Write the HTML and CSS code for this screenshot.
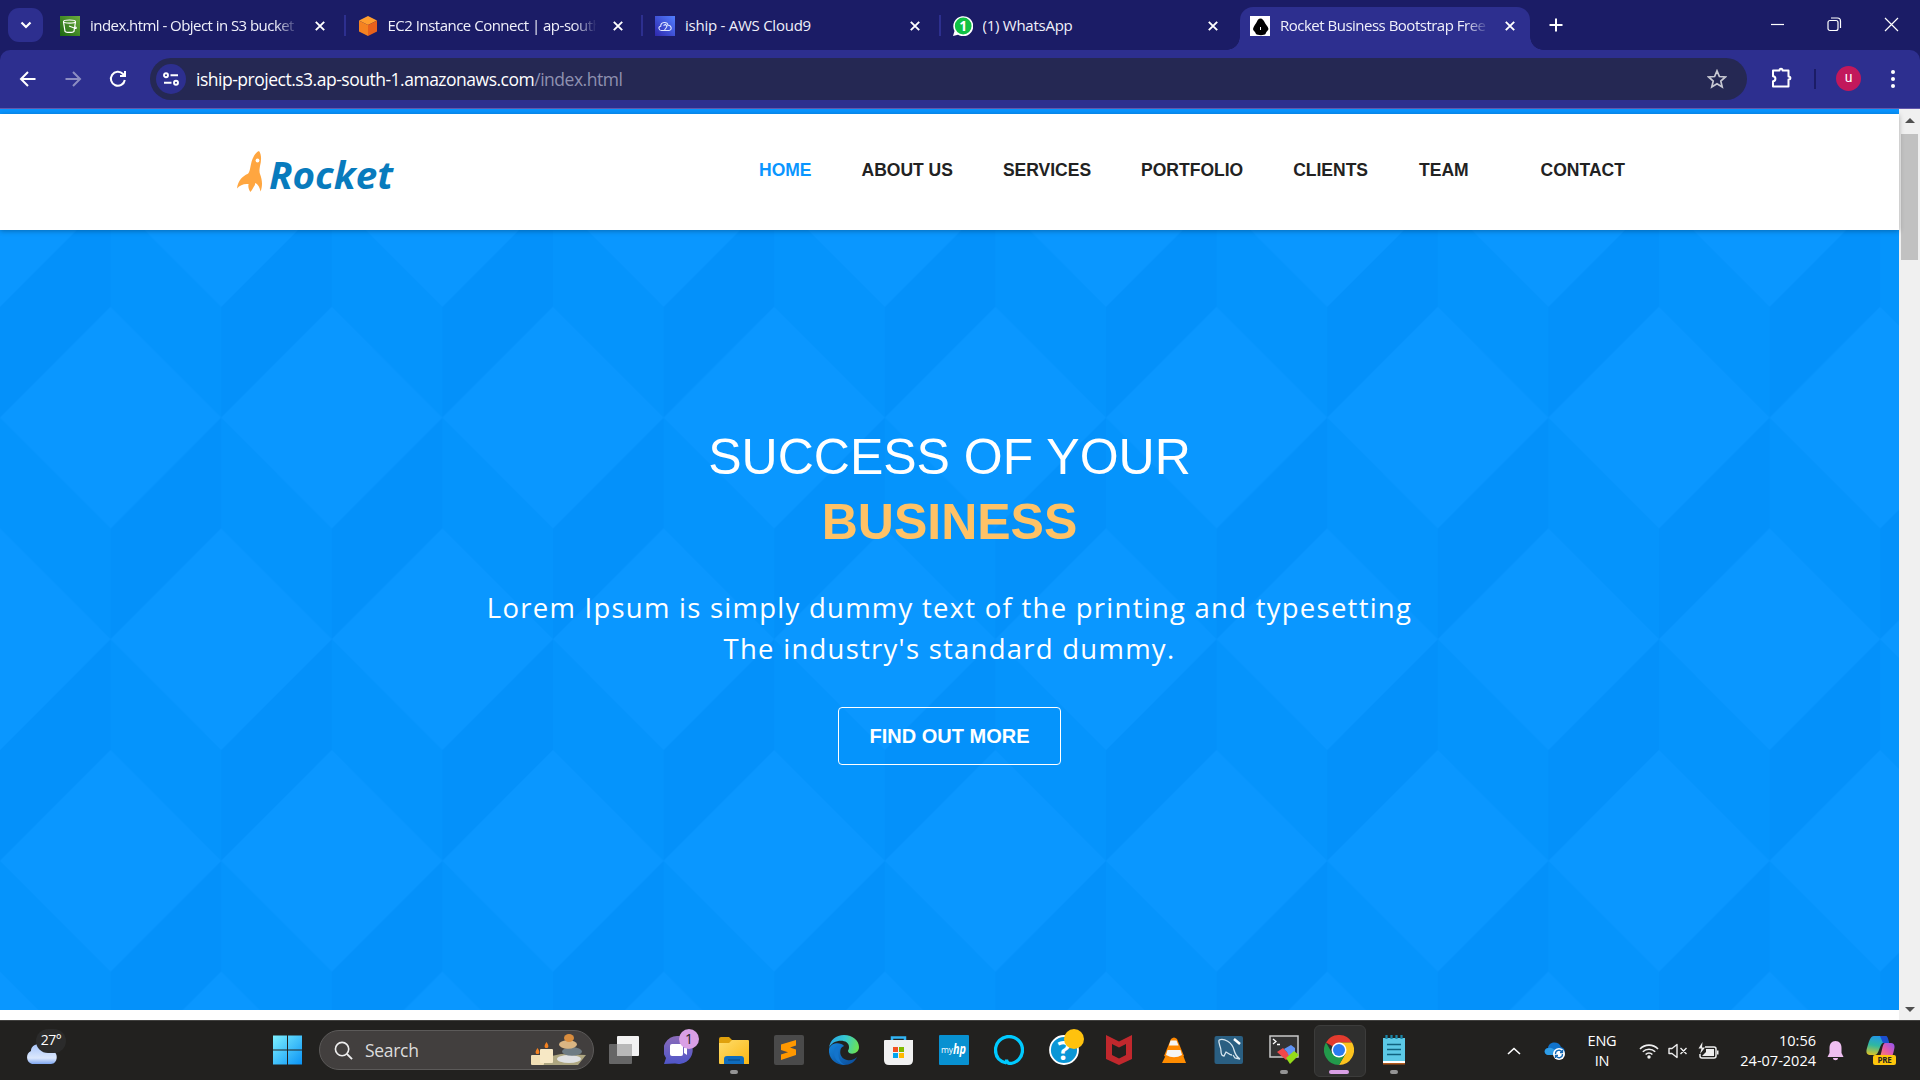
FILE: index.html
```html
<!DOCTYPE html>
<html lang="en">
<head>
<meta charset="utf-8">
<title>Rocket Business Bootstrap Free</title>
<link rel="stylesheet" href="styles.css">
</head>
<body>
<div class="screen">
  <div class="tabstrip">
    <div class="tab-search"><svg width="12" height="8" viewBox="0 0 12 8"><path d="M1.5 1.5 6 6l4.500-4.500" fill="none" stroke="#fff" stroke-width="2.200"/></svg></div>
    <div class="tab">
      <svg class="fav" viewBox="0 0 20 20"><defs><linearGradient id="s3" x1="0" y1="1" x2="1" y2="0"><stop offset="0" stop-color="#1b660f"/><stop offset="1" stop-color="#6cae3e"/></linearGradient></defs><rect width="20" height="20" fill="url(#s3)"/><g fill="none" stroke="#fff" stroke-width="1.200"><ellipse cx="9.500" cy="5.600" rx="6" ry="1.600"/><path d="M3.500 5.800 5 15.300c1 1.500 8 1.500 9 0L15.500 5.800M9 10l6.500 2.500c1.500 0 .500-1.500-1-2.300"/></g></svg>
      <span class="tab-title fade t1">index.html - Object in S3 bucket</span>
      <svg class="x" viewBox="0 0 10 10"><path d="M.8.8l8.400 8.400M9.200.8.8 9.200"/></svg>
    </div>
    <div class="tab">
      <svg class="fav" viewBox="0 0 20 20"><path d="M10 0l9 4.500-9 4.500-9-4.500z" fill="#ff9d2e"/><path d="M1 4.500 10 9v11l-9-4.500z" fill="#f58220"/><path d="M19 4.500 10 9v11l9-4.500z" fill="#e8611c"/></svg>
      <span class="tab-title fade t2">EC2 Instance Connect | ap-south</span>
      <svg class="x" viewBox="0 0 10 10"><path d="M.8.8l8.400 8.400M9.200.8.8 9.200"/></svg>
    </div>
    <div class="tab">
      <svg class="fav" viewBox="0 0 20 20"><defs><linearGradient id="c9" x1="0" y1="1" x2="1" y2="0"><stop offset="0" stop-color="#2e27ad"/><stop offset="1" stop-color="#527fff"/></linearGradient></defs><rect width="20" height="20" fill="url(#c9)"/><path d="M6.500 14.500c-3 0-3.500-3.800-.8-4.300 0-4.500 6.500-5 7.300-1 3.500-.2 4.500 5 1 5.300zM8.500 9.500l2-1 1.500 1.500-1 2-1.500 2" fill="none" stroke="#dfe6ff" stroke-width="1.100"/></svg>
      <span class="tab-title">iship - AWS Cloud9</span>
      <svg class="x" viewBox="0 0 10 10"><path d="M.8.8l8.400 8.400M9.200.8.8 9.200"/></svg>
    </div>
    <div class="tab">
      <svg class="fav" viewBox="0 0 20 20"><path d="M0 20l1.500-5A10 10 0 1 1 5 18.700z" fill="#fff"/><circle cx="10.200" cy="10" r="8.400" fill="#0fc143"/><text x="10.200" y="15" class="wa">1</text></svg>
      <span class="tab-title">(1) WhatsApp</span>
      <svg class="x" viewBox="0 0 10 10"><path d="M.8.8l8.400 8.400M9.200.8.8 9.200"/></svg>
    </div>
    <div class="tab active">
      <svg class="fav" viewBox="0 0 20 20"><rect width="20" height="20" fill="#fff"/><path d="M10.500 2.500c2 0 3 2 4 3.500.5 2 3.500 4 4 7-.5 2-2.500 2.500-3 5-1 1.500-8 1.500-9.500 0-.5-2.500-3-3-3-5 .5-3 3-5 4-7.500.5-1.500 1.500-3 3.500-3z" fill="#000"/><path d="M10.500 11v3" stroke="#fff" stroke-width="1"/></svg>
      <span class="tab-title fade t5">Rocket Business Bootstrap Free</span>
      <svg class="x" viewBox="0 0 10 10"><path d="M.8.8l8.400 8.400M9.200.8.8 9.200"/></svg>
    </div>
    <svg class="plus" viewBox="0 0 14 14"><path d="M7 .5v13M.5 7h13" stroke="#fff" stroke-width="2"/></svg>
    <div class="winctl">
      <svg width="15" height="15" viewBox="0 0 15 15"><path d="M1 7.500h13"/></svg>
      <svg width="15" height="15" viewBox="0 0 15 15"><rect x="1" y="3.500" width="10" height="10" rx="2"/><path d="M4 1h6.500a3 3 0 0 1 3 3v7"/></svg>
      <svg width="15" height="15" viewBox="0 0 15 15"><path d="M1 1l13 13M14 1 1 14"/></svg>
    </div>
  </div>
  <div class="toolbar">
    <svg class="nav-ico" viewBox="0 0 20 20"><path d="M17.500 10H3.500M10 3l-7 7 7 7"/></svg>
    <svg class="nav-ico dim" viewBox="0 0 20 20"><path d="M2.500 10h14M10 3l7 7-7 7"/></svg>
    <svg class="nav-ico" viewBox="0 0 20 20"><path d="M16.800 11a7 7 0 1 1-1.800-6l1.700 1.800M17 2v5h-5"/></svg>
    <div class="omnibox">
      <div class="site-info"><svg width="16" height="14" viewBox="0 0 16 14"><g fill="none" stroke="#fff" stroke-width="1.900"><circle cx="3" cy="3.200" r="2"/><path d="M7.500 3.200H15M1 10.800h7.500"/><circle cx="13" cy="10.800" r="2"/></g></svg></div>
      <span class="url">iship-project.s3.ap-south-1.amazonaws.com<span class="path">/index.html</span></span>
      <svg class="star" viewBox="0 0 20 20"><path d="M10 1.800l2.400 5.700 6 .5-4.600 4 1.400 6L10 14.800 4.800 18l1.400-6-4.600-4 6-.5z" fill="none" stroke="#c7c8d2" stroke-width="1.700"/></svg>
    </div>
    <svg class="puzzle" viewBox="0 0 22 22"><path d="M2 4h6.500c0-2.200 3-2.200 3 0H17.500v6c2.500 0 2.500 3 0 3V20H2v-5.300c3.200-.3 3.200-4.700 0-5z" fill="none" stroke="#fff" stroke-width="2" stroke-linejoin="round"/></svg>
    <div class="bar-sep"></div>
    <div class="avatar">u</div>
    <svg class="dots" viewBox="0 0 4 18"><g fill="#fff"><circle cx="2" cy="2" r="2"/><circle cx="2" cy="9" r="2"/><circle cx="2" cy="16" r="2"/></g></svg>
  </div>

  <div class="viewport">
    <div class="page">
      <header class="site-head">
        <svg class="logo" width="160" height="50" viewBox="0 0 160 50"><path d="M22 5c2.500 3 2.600 9 1 15-.7 4-.7 6 0 8 2 5 3 11 .6 17.500-.8-3.500-2.500-7.500-5.500-8.500.2 2.500-1.500 3.500-2 5-.8 1.500-1.800 3-2.800 4-1-1.500-2.600-4.500-1.700-8-5-.5-8.600 1-11.600 4.500C1 34 6 30 10.500 28c3-1.500 2.500-9 5-15C17.500 9 19 6 22 5z" fill="#ffa640"/><circle cx="20.500" cy="14.500" r="1.900" fill="#fff"/><text x="32" y="42.500" textLength="124" lengthAdjust="spacingAndGlyphs">Rocket</text></svg>
        <nav class="menu"><a class="on">HOME</a><a>ABOUT US</a><a>SERVICES</a><a>PORTFOLIO</a><a>CLIENTS</a><a class="team">TEAM</a><a class="last">CONTACT</a></nav>
      </header>
      <section class="hero">
        <svg class="facets" width="1899" height="780">
          <defs><pattern id="cubes" width="221.200" height="443.200" patternUnits="userSpaceOnUse" patternTransform="translate(0 -34)">
            <rect width="221.200" height="443.200" fill="#0594fc"/>
            <path d="M110.600 332.400 221.200 221.600V332.400L110.600 443.200zM0 110.800 110.600 0V110.800L0 221.600z" fill="#0491fa"/>
            <path d="M110.600 110.800 221.200 221.600 110.600 332.400 0 221.600zM0 0h110.600L0 110.800zM221.200 0V110.800L110.600 0zM0 443.200V332.400L110.600 443.200zM221.200 443.200V332.400L110.600 443.200z" fill="#0a97ff"/>
          </pattern></defs>
          <rect width="1899" height="780" fill="url(#cubes)"/>
        </svg>
        <div class="hero-body">
          <h1>SUCCESS OF YOUR<br><strong>BUSINESS</strong></h1>
          <p>Lorem Ipsum is simply dummy text of the printing and typesetting<br>The industry's standard dummy.</p>
          <a class="cta">FIND OUT MORE</a>
        </div>
      </section>
    </div>
    <div class="scrollbar"><i class="up"></i><div class="thumb"></div><i class="down"></i></div>
  </div>

  <div class="taskbar">
    <div class="weather">
      <svg width="42" height="36" viewBox="0 0 42 36"><defs><linearGradient id="cl" x1="0" y1="0" x2="0" y2="1"><stop offset="0" stop-color="#a9c6fa"/><stop offset=".7" stop-color="#dbe7fc"/><stop offset="1" stop-color="#7ea6f0"/></linearGradient></defs><path d="M20 17h10v7z" fill="#f58220"/><path d="M8 35a7 7 0 0 1-1-13c0-8 12-9 14-2 2-2 6-1 7 2 7 1 6 13-1 13z" fill="url(#cl)"/></svg>
      <span class="temp">27°</span>
    </div>
    <div class="dock">
      <div class="app start"><svg viewBox="0 0 30 30"><defs><linearGradient id="win" x1="0" y1="0" x2="1" y2="1"><stop offset="0" stop-color="#7df0ff"/><stop offset="1" stop-color="#0a93f5"/></linearGradient></defs><path d="M1 .5h14v14H1zM16 .5h14v14H16zM1 15.500h14v14H1zM16 15.500h14v14H16z" fill="url(#win)"/></svg></div>
      <div class="search"><svg class="lens" viewBox="0 0 20 20"><circle cx="8.500" cy="8.500" r="7" fill="none" stroke="#eee" stroke-width="1.700"/><path d="M13.500 13.500 19 19" stroke="#eee" stroke-width="2"/></svg><span>Search</span>
        <svg class="zen" width="60" height="34" viewBox="0 0 60 34"><path d="M4 27 32 21l25 1-8 10H6z" fill="#aea681"/><rect x="2" y="22" width="13" height="10" rx="1" fill="#f1dfb5"/><rect x="11" y="16" width="13" height="14" rx="1" fill="#f7e8c5"/><path d="M8.500 15c3 4 2 6 0 6s-3-2 0-6M17.500 9c3 4 2 6 0 6s-3-2 0-6" fill="#f58220"/><ellipse cx="40" cy="26" rx="12" ry="4" fill="#dfe0e2"/><ellipse cx="43" cy="18.500" rx="10" ry="4.300" fill="#6f7c84"/><ellipse cx="39" cy="11.500" rx="9" ry="4.200" fill="#d9b583"/><ellipse cx="40" cy="5" rx="5" ry="4" fill="#d98d3e"/></svg>
      </div>
      <div class="app"><svg viewBox="0 0 30 30"><rect x="8" y="1" width="22" height="20" rx="1" fill="#f2f2f2"/><rect x="0" y="9" width="23" height="20" rx="1" fill="#666"/><path d="M8 9h15v12H8z" fill="#b8b8b8"/></svg></div>
      <div class="app"><svg viewBox="0 0 30 30"><defs><linearGradient id="ch" x1="0" y1="0" x2="0" y2="1"><stop offset="0" stop-color="#8b6bb8"/><stop offset="1" stop-color="#4f56c9"/></linearGradient></defs><path d="M15 1a14 14 0 1 1-4 27.500L0 29l2-6A14 14 0 0 1 15 1z" fill="url(#ch)"/><rect x="6" y="9" width="13" height="12" rx="2" fill="#fff"/><path d="M20 13l3-2v9l-3-2z" fill="#fff"/></svg><b class="badge">1</b></div>
      <div class="app"><svg viewBox="0 0 30 30"><defs><linearGradient id="fo" x1="0" y1="0" x2="1" y2="1"><stop offset="0" stop-color="#ffdd6b"/><stop offset="1" stop-color="#fbb713"/></linearGradient></defs><path d="M0 4q0-2 2-2h8l4 4v6H0z" fill="#e0a10c"/><path d="M0 8h10l3-3h16q1 0 1 1v23H1q-1 0-1-1z" fill="url(#fo)"/><path d="M5 29v-5q0-3 3-3h14q3 0 3 3v5z" fill="#0f6cbd"/><path d="M9 25h12" stroke="#08457c"/></svg><i class="run"></i></div>
      <div class="app"><svg viewBox="0 0 30 30"><rect width="30" height="30" rx="2" fill="#4a4a4a"/><path d="M7 9.500 22 5v5.500l-6 2 6 2V20L7 25v-5.500l7-2.200-7-2.200z" fill="#ff9800"/></svg></div>
      <div class="app"><svg viewBox="0 0 30 30"><defs><linearGradient id="e1" x1="0" y1=".3" x2="1" y2=".5"><stop offset="0" stop-color="#28a7e8"/><stop offset=".5" stop-color="#36c8d0"/><stop offset="1" stop-color="#6be254"/></linearGradient><linearGradient id="e2" x1="0" y1="0" x2="1" y2="1"><stop offset="0" stop-color="#1585dc"/><stop offset="1" stop-color="#0b4a97"/></linearGradient></defs><path d="M0 13C1 5 7 0 15 0c9 0 15 6 15 12 0 8-11 8-11 4 0-1 1-1 1-4 0-9-17-8-20 1z" fill="url(#e1)"/><path d="M0 14C2 7 12 7 15 11c-5 1-6 12 3 14 4 1 8-1 10-3-2 5-7 8-13 8C7 30-1 24 0 14z" fill="url(#e2)"/><path d="M15 11c-8 1-7 16 1 19-6-1-11-6-11-12 0-5 4-9 10-7z" fill="#1374cb"/></svg></div>
      <div class="app"><svg viewBox="0 0 30 30"><path d="M8 7V2.500h13V7" fill="none" stroke="#32b4f4" stroke-width="2.500"/><path d="M0 6q0-1 1-1h28v20q0 5-5 5H5q-5 0-5-5z" fill="#f1f1f1"/><path d="M9 12h5v5H9z" fill="#f25022"/><path d="M15 12h5v5h-5z" fill="#7fba00"/><path d="M9 18h5v5H9z" fill="#00a4ef"/><path d="M15 18h5v5h-5z" fill="#ffb900"/></svg></div>
      <div class="app"><svg viewBox="0 0 30 30"><rect width="30" height="30" rx="1" fill="#0891d1"/><text x="2" y="18" class="my">my</text><text x="14" y="19" class="hp" textLength="13" lengthAdjust="spacingAndGlyphs">hp</text></svg></div>
      <div class="app"><svg viewBox="0 0 30 30"><path d="M12.500 28C3 26 1.500 19 1.500 15a13.500 13.500 0 1 1 14 13.500C13 28 12.500 27 12.500 24.500" fill="none" stroke="#00caff" stroke-width="3.300"/></svg></div>
      <div class="app"><svg viewBox="0 0 30 30"><circle cx="15" cy="15" r="14" fill="#0a96d6" stroke="#fff" stroke-width="1.800"/><text x="15" y="25" class="q">?</text></svg><b class="badge gold"></b></div>
      <div class="app"><svg viewBox="0 0 30 30"><path d="M2 0l13 6.500L28 0v24l-13 6-13-6zm6 9v11l7 3.500 7-3.500V9l-7 3.500z" fill="#c1282d" fill-rule="evenodd"/></svg></div>
      <div class="app"><svg viewBox="0 0 30 30"><path d="M7 20h17l3 8H3z" fill="#ff8c00"/><path d="M12 4q3-3 6 0l7 17q-10 6-20 0z" fill="#ff8800"/><path d="M11.500 5.500h6l2 5h-9.500zM8.500 15h13l1.500 5q-8 4.500-16 0z" fill="#f5f5f5"/></svg></div>
      <div class="app"><svg viewBox="0 0 30 30"><rect x=".5" y="1" width="28.500" height="28" rx="2" fill="#2a5f82"/><path d="M5 5c5-2 13 2 15 10 1 4 3 7 6 9l-5-1-2-3M5 5c-1 4 2 6 2 11 0 3 1 5 3 5l2-4c2 1 4 3 6 3" fill="none" stroke="#d7e6ef" stroke-width="1.300"/><path d="M20 4l6 5" stroke="#fff" stroke-width="2.500"/></svg></div>
      <div class="app"><svg viewBox="0 0 30 30"><rect x="1" y="1" width="28" height="21" fill="#333" stroke="#c9c9c9" stroke-width="1.500"/><path d="M4 4l3 2.500L4 9M8 9.500h3" fill="none" stroke="#fff" stroke-width="1.300"/><path d="M8 17l6-4 8 8-5 4z" fill="#f0484a"/><path d="M15 14l7-4 4 3v7l-6 1-2-4z" fill="#5f93f5"/><path d="M17 23l8-7 5 4-9 9z" fill="#94dc1a"/></svg><i class="run"></i></div>
      <div class="app current"><svg viewBox="0 0 30 30"><path d="M15 15 2 7.500A15 15 0 0 1 28 7.500H15z" fill="#e33b2e"/><path d="M15 7.500h13A15 15 0 0 1 15 30l6.500-11.300z" fill="#fcc31e"/><path d="M2 7.500A15 15 0 0 0 15 30l6.500-11.300L8.500 18.700z" fill="#229a4b"/><circle cx="15" cy="15" r="7.500" fill="#fff"/><circle cx="15" cy="15" r="6" fill="#2a7bf0"/></svg><i class="run pink"></i></div>
      <div class="app"><svg viewBox="0 0 30 30"><path d="M4 25h22v4.500H4z" fill="#b35a1c"/><path d="M4 3h22v25H4z" fill="#fff"/><path d="M4 3h22v23H4z" fill="#5cc9e6"/><path d="M8 9.500h14M8 14.500h14M8 19.500h14" stroke="#10637f" stroke-width="1.600"/><path d="M7.500 0v4M12.500 0v4M17.500 0v4M22.500 0v4" stroke="#1986a8" stroke-width="2.200"/></svg><i class="run"></i></div>
    </div>
    <div class="tray">
      <svg class="chev" viewBox="0 0 14 8"><path d="M1 7l6-5.500L13 7" fill="none" stroke="#fff" stroke-width="1.600"/></svg>
      <svg class="cloud" viewBox="0 0 22 20"><path d="M4 14C-1 13 0 7 4 7c1-7 11-7 13-1 5 1 5 8 0 8z" fill="#1073cc"/><path d="M4 14C-1 13 0 7 5 7c4-1 7 4 12 7z" fill="#2f9de6"/><circle cx="15" cy="13" r="6" fill="#fff"/><path d="M11.500 13a3.500 3.500 0 0 1 6.500-2M18.500 13a3.500 3.500 0 0 1-6.500 2M18.500 9v2.500H16M11.500 17v-2.500H14" fill="none" stroke="#1267b4" stroke-width="1.300"/></svg>
      <div class="lang">ENG<br>IN</div>
      <svg class="wifi" viewBox="0 0 20 16"><path d="M1 6a12.500 12.500 0 0 1 18 0M3.800 8.800a8.700 8.700 0 0 1 12.400 0M6.600 11.500a4.900 4.900 0 0 1 6.800 0" fill="none" stroke="#eee" stroke-width="1.600"/><circle cx="10" cy="14" r="1.700" fill="#eee"/></svg>
      <svg class="spk" viewBox="0 0 20 16"><path d="M1 5.500h3L9 1.500v13l-5-4H1zM12.500 5l6 6M18.500 5l-6 6" fill="none" stroke="#eee" stroke-width="1.400" stroke-linejoin="round"/></svg>
      <svg class="bat" viewBox="0 0 21 18"><path d="M7 5h9q2 0 2 2v7q0 2-2 2H4q-2 0-2-2v-2" fill="none" stroke="#eee" stroke-width="1.500"/><path d="M8 7h8v7H4l4-4zM19 8.500h1.500v4H19zM4.500 0 .5 6.500h3L2 12l5-6.500H4z" fill="#eee"/></svg>
      <div class="clock">10:56<br>24-07-2024</div>
      <svg class="bell" viewBox="0 0 17 20"><path d="M8.500 0C4.500 0 2.500 3 2.500 7v5L.5 16h16l-2-4V7c0-4-2-7-6-7zM6 17h5c0 3-5 3-5 0z" fill="#efbff1"/></svg>
      <svg class="copilot" viewBox="0 0 30 29"><defs><linearGradient id="cp1" x1=".5" y1="0" x2=".3" y2="1"><stop offset="0" stop-color="#2297e8"/><stop offset=".5" stop-color="#2fb8a0"/><stop offset="1" stop-color="#d8c329"/></linearGradient><linearGradient id="cp2" x1="1" y1="0" x2="0" y2="1"><stop offset="0" stop-color="#8d55f4"/><stop offset=".5" stop-color="#e55aa8"/><stop offset="1" stop-color="#ff9157"/></linearGradient></defs><path d="M8 0h12l3 7h-6c-3 0-4 12-8 12H4c-4 0-4-4-3-7C3 6 4 0 8 0z" fill="url(#cp1)"/><path d="M14 0h6q2 0 3 7h-6z" fill="#1b4fd0"/><path d="M19 7h6c4 0 4 4 3 7-1 5-2 8-6 8h-9c3-3 3-15 6-15z" fill="url(#cp2)"/><rect x="7" y="19" width="23" height="10" rx="2" fill="#fdc50c"/><text x="18.500" y="27" class="pre">PRE</text></svg>
    </div>
  </div>
</div>
</body>
</html>
```
FILE: styles.css
```css
* { box-sizing: border-box; }
html, body { margin: 0; height: 100%; overflow: hidden; }
body { font-family: "Open Sans", "Noto Sans", sans-serif; }
svg { display: block; flex: none; }
.screen { width: 1920px; height: 1080px; display: flex; flex-direction: column; background: #1b1c66; }

/* browser tabs */
.tabstrip { height: 50px; flex: none; display: flex; padding: 7px 0 0 8px; color: #f0f0fa; }
.tab-search { width: 35px; height: 34px; margin: 1px 7px 0 0; border-radius: 11px; background: #2d2f8f; display: flex; align-items: center; justify-content: center; }
.tab { width: 297.5px; height: 43px; flex: none; display: flex; align-items: center; padding: 0 19px 6px 10px; position: relative; }
.tab:not(.active)::after { content: ""; position: absolute; right: 2px; top: 8px; width: 2px; height: 21px; background: #2d2f8f; }
.tab:nth-child(5)::after { display: none; }
.fav { width: 20px; height: 20px; }
.tab-title { width: 211px; margin: 0 0 2px 10px; flex: none; font-size: 15px; line-height: 22px; white-space: nowrap; overflow: hidden; letter-spacing: -.25px; }
.fade { -webkit-mask-image: linear-gradient(90deg, #000 88%, transparent 99%); mask-image: linear-gradient(90deg, #000 88%, transparent 99%); }
.t1 { letter-spacing: -.55px; }
.t2 { letter-spacing: -.5px; }
.t5 { letter-spacing: -.5px; }
.x { width: 10px; height: 10px; margin-left: 14px; }
.x path { stroke: #fff; stroke-width: 1.9; fill: none; }
.active { width: 290px; background: #2d2f8f; border-radius: 13px 13px 0 0; }
.active::before, .active::after { content: ""; position: absolute; bottom: 0; width: 13px; height: 13px; }
.active::before { left: -13px; background: radial-gradient(circle at 0 0, transparent 12.500px, #2d2f8f 13px); }
.active::after { right: -13px; background: radial-gradient(circle at 100% 0, transparent 12.500px, #2d2f8f 13px); }
.wa { font: bold 14px "Open Sans", sans-serif; fill: #fff; text-anchor: middle; }
.plus { width: 14px; height: 14px; margin: 11px 0 0 19px; }
.winctl { display: flex; gap: 42px; margin: 10px 21px 0 auto; }
.winctl svg { fill: none; stroke: #fff; stroke-width: 1.2; }

/* address bar */
.toolbar { height: 59px; flex: none; display: flex; align-items: center; background: #2d2f8f; border-bottom: 1px solid #6258ab; border-radius: 10px 10px 0 0; padding-left: 18px; }
.nav-ico { width: 20px; height: 20px; margin-right: 25px; }
.nav-ico path { fill: none; stroke: #fff; stroke-width: 2; }
.dim { opacity: .45; }
.omnibox { width: 1597px; height: 42px; margin-left: -3px; border-radius: 21px; background: #252853; display: flex; align-items: center; padding: 0 20px 0 6px; }
.site-info { width: 30px; height: 30px; border-radius: 50%; background: #2d2f8f; display: flex; align-items: center; justify-content: center; }
.url { margin-left: 10px; font-size: 17.5px; color: #fff; white-space: nowrap; letter-spacing: -.49px; }
.path { color: #8f91b0; }
.star { width: 20px; height: 20px; margin-left: auto; }
.puzzle { width: 22px; height: 23px; margin: 0 21px 3px 24px; }
.bar-sep { width: 2px; height: 20px; background: #1b1c66; }
.avatar { width: 25px; height: 25px; margin: 0 30px 1px 20px; border-radius: 50%; background: #c2185b; color: #fff; font: 14px/23px Roboto, sans-serif; text-align: center; }
.dots { width: 4px; height: 18px; }

/* web page */
.viewport { height: 911px; flex: none; display: flex; background: #fff; }
.page { width: 1899px; border-top: 5px solid #0894ff; }
.site-head { height: 116px; display: flex; padding-left: 237px; position: relative; z-index: 1; background: #fff; box-shadow: 0 1px 5px rgba(0,0,0,.3); }
.logo { margin-top: 32px; overflow: visible; }
.logo text { font: italic bold 38px "Open Sans", sans-serif; fill: #087bbd; }
.menu { display: flex; gap: 50px; margin: 44px 0 0 362px; font: bold 17.5px/25px "Liberation Sans", Arial, sans-serif; color: #222; white-space: nowrap; }
.menu .on { color: #0a96ff; }
.menu .team { margin-left: 1px; }
.menu .last { margin-left: 22px; }
.hero { height: 780px; position: relative; overflow: hidden; background: #0593fb; }
.facets { position: absolute; left: 0; top: 0; }
.hero-body { position: relative; display: flex; flex-direction: column; align-items: center; padding-top: 195px; color: #fff; text-align: center; }
h1 { margin: 0; font: 50px/65px "Liberation Sans", Arial, sans-serif; }
h1 strong { color: #ffc266; }
.hero p { margin: 32px 0 0; font-size: 27.5px; line-height: 41px; letter-spacing: 1.25px; white-space: nowrap; }
.cta { width: 223px; height: 58px; margin-top: 38px; border: 1px solid #fff; border-radius: 4px; font: bold 20px/56px "Liberation Sans", Arial, sans-serif; }
.scrollbar { width: 21px; background: #f0f0f0; display: flex; flex-direction: column; align-items: center; }
.scrollbar i { width: 0; height: 0; border: 5px solid transparent; }
.scrollbar .up { margin-top: 4px; border-bottom-color: #505050; }
.scrollbar .down { margin: auto 0 3px; border-top-color: #505050; }
.thumb { width: 17px; height: 126px; margin-top: 11px; background: #c1c1c1; }

/* taskbar */
.taskbar { height: 60px; flex: none; display: flex; background: #22211f; border-top: 1px solid #41403e; color: #fff; }
.weather { width: 259px; position: relative; padding: 8px 0 0 24px; }
.temp { position: absolute; left: 36px; top: 8px; width: 30px; height: 24px; border-radius: 12px; background: #2b2b2b; font-size: 14px; line-height: 22px; text-align: center; letter-spacing: -.5px; }
.dock { display: flex; }
.app { width: 55px; height: 59px; position: relative; padding: 14px 0 0 12.500px; }
.app svg { width: 30px; height: 30px; position: relative; }
.start { width: 60px; }
.search { width: 275px; height: 40px; margin: 9px 2px 0 0; border: 1px solid #5c5a59; border-radius: 20px; background: #423f3e; display: flex; align-items: center; font-size: 17.5px; letter-spacing: -.3px; color: #dcdcdc; }
.lens { width: 19px; height: 19px; margin: 0 12px 0 14px; }
.zen { margin: 0 4px 0 auto; }
.badge { position: absolute; left: 28px; top: 8px; width: 20px; height: 20px; border-radius: 50%; background: #d99fe5; color: #222; font: 14px/20px "Open Sans", sans-serif; text-align: center; }
.gold { background: #ffc20e; }
.run { position: absolute; left: 23.500px; top: 49px; width: 8px; height: 4px; border-radius: 2px; background: #949494; }
.pink { left: 17.500px; width: 20px; background: #d99fe5; }
.current::before { content: ""; position: absolute; left: 2.500px; top: 4px; width: 50px; height: 50px; border: 1px solid #3c3c3b; border-radius: 6px; background: #2f2f2e; }
.my { font: 8.500px "Open Sans", sans-serif; fill: #fff; }
.hp { font: italic bold 14px "Open Sans", sans-serif; fill: #fff; }
.q { font: bold 27px "Open Sans", sans-serif; fill: #fff; text-anchor: middle; }
.tray { margin-left: auto; display: flex; align-items: center; font-size: 14.5px; line-height: 20px; letter-spacing: -.2px; }
.chev { width: 14px; height: 8px; margin-right: 23px; }
.cloud { width: 22px; height: 20px; margin-right: 21px; }
.lang { width: 30px; margin-right: 22px; text-align: center; }
.wifi { width: 20px; height: 16px; margin-right: 9px; }
.spk { width: 20px; height: 16px; margin-right: 10px; }
.bat { width: 21px; height: 18px; margin-right: 17px; }
.clock { width: 80px; text-align: right; white-space: nowrap; margin-right: 11px; letter-spacing: 0; }
.bell { width: 17px; height: 20px; margin-right: 22px; }
.copilot { width: 30px; height: 29px; margin-right: 24px; }
.pre { font: bold 8px "Open Sans", sans-serif; fill: #222; text-anchor: middle; }
```
